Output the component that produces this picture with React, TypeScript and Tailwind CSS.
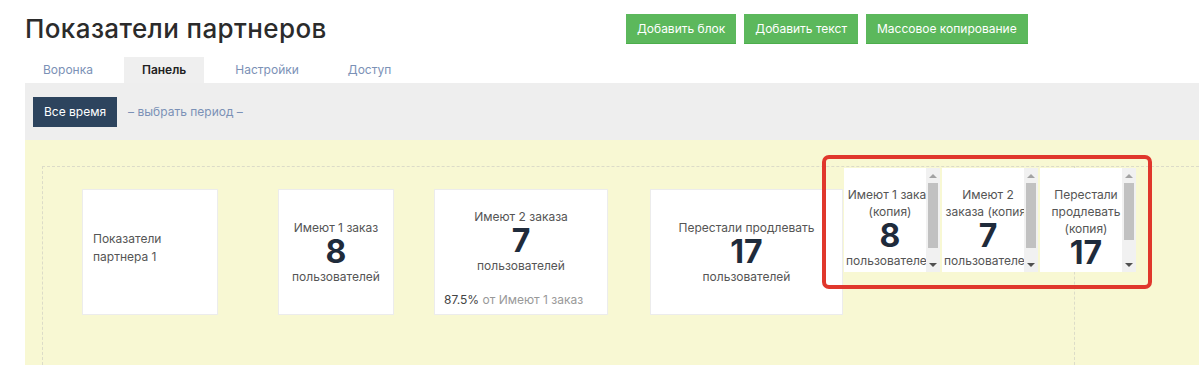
import React from "react";

const font = "font-['Inter','Noto_Sans',sans-serif]";

function GreenButton({ children }: { children: React.ReactNode }) {
  return (
    <button className="h-[30px] px-[11px] bg-[#5cb85c] border-b border-[#4cae4c] text-[12px] leading-[30px] text-white">
      {children}
    </button>
  );
}

function Tab({ label, active = false }: { label: string; active?: boolean }) {
  return (
    <div
      className={
        active
          ? "h-[26px] px-[18px] bg-[#efefef] text-[12px] leading-[26px] font-semibold text-[#222]"
          : "h-[26px] px-[18px] text-[12px] leading-[26px] text-[#7b91b6]"
      }
    >
      {label}
    </div>
  );
}

function StatCard({
  title,
  value,
  width,
}: {
  title: string;
  value: string;
  width: string;
}) {
  return (
    <div
      className={`relative ${width} h-[126px] mt-[22px] bg-white border border-[#ececec] flex flex-col items-center justify-center text-center`}
    >
      <div className="text-[12px] leading-[17px] text-[#555] whitespace-nowrap">{title}</div>
      <div className="text-[32px] leading-[32px] font-bold text-[#1f2b3b]">{value}</div>
      <div className="text-[12px] leading-[17px] text-[#555]">пользователей</div>
    </div>
  );
}

function Scrollbar({ thumb }: { thumb: string }) {
  return (
    <div className="w-[14px] h-full bg-[#f1f1f1] flex flex-col items-center shrink-0">
      <div className="h-[15px] w-full flex items-center justify-center">
        <div className="w-0 h-0 border-l-[4px] border-r-[4px] border-b-[4px] border-l-transparent border-r-transparent border-b-[#a3a3a3]" />
      </div>
      <div className={`w-[10px] ${thumb} bg-[#c1c1c1]`} />
      <div className="flex-1" />
      <div className="h-[15px] w-full flex items-center justify-center">
        <div className="w-0 h-0 border-l-[4px] border-r-[4px] border-t-[4px] border-l-transparent border-r-transparent border-t-[#505050]" />
      </div>
    </div>
  );
}

function CopyCard({
  lines,
  value,
  tail = true,
  thumb,
  className = "",
}: {
  lines: string[];
  value: string;
  tail?: boolean;
  thumb: string;
  className?: string;
}) {
  return (
    <div className={`relative w-[96px] h-[104px] mt-[1px] bg-white flex ${className}`}>
      <div className="w-[82px] h-full overflow-hidden">
        <div className="w-[92px] px-[2px] pt-[18px] text-center">
          {lines.map((l) => (
            <div key={l} className="text-[12px] leading-[17px] text-[#555] whitespace-nowrap">
              {l}
            </div>
          ))}
          <div className="text-[32px] leading-[32px] font-bold text-[#1f2b3b]">{value}</div>
          {tail && (
            <div className="text-[12px] leading-[17px] text-[#555] whitespace-nowrap">
              пользователей
            </div>
          )}
        </div>
      </div>
      <Scrollbar thumb={thumb} />
    </div>
  );
}

export default function App() {
  return (
    <div className={`relative w-[1199px] h-[365px] overflow-hidden bg-white ${font}`}>
      {/* header */}
      <div className="flex items-start pl-[25px] pt-[14px]">
        <h1 className="w-[601px] text-[26px] leading-[30px] font-medium tracking-[0.4px] text-[#2b2b2b]">
          Показатели партнеров
        </h1>
        <div className="flex gap-[8px]">
          <GreenButton>Добавить блок</GreenButton>
          <GreenButton>Добавить текст</GreenButton>
          <GreenButton>Массовое копирование</GreenButton>
        </div>
      </div>

      {/* tabs */}
      <div className="flex gap-[13px] pl-[25px] mt-[13px]">
        <Tab label="Воронка" />
        <Tab label="Панель" active />
        <Tab label="Настройки" />
        <Tab label="Доступ" />
      </div>

      {/* period bar */}
      <div className="ml-[25px] h-[57px] bg-[#eeeeee] flex items-center pl-[8px]">
        <button className="h-[30px] px-[11px] bg-[#2d445e] text-[12px] text-white">Все время</button>
        <span className="ml-[11px] text-[12px] text-[#7b91b6]">– выбрать период –</span>
      </div>

      {/* dashboard */}
      <div className="relative ml-[25px] h-[225px] bg-[#f8f8d3] pt-[26px] pl-[17px]">
        <div className="absolute left-[1049px] top-[26px] bottom-0 border-l border-dashed border-[#dcdcc8]" />
        <div className="h-full border-l border-t border-dashed border-[#dcdcc8] flex items-start pl-[39px]">
          <div className="relative w-[136px] h-[126px] mt-[22px] bg-white border border-[#ececec] flex items-center px-[10px] pb-[8px]">
            <div className="text-[12px] leading-[18px] text-[#555]">
              Показатели
              <br />
              партнера 1
            </div>
          </div>
          <div className="ml-[60px]">
            <StatCard title="Имеют 1 заказ" value="8" width="w-[116px]" />
          </div>
          <div className="relative ml-[40px] w-[174px] h-[126px] mt-[22px] bg-white border border-[#ececec] flex flex-col text-center">
            <div className="pt-[18px] text-[12px] leading-[17px] text-[#555]">Имеют 2 заказа</div>
            <div className="text-[32px] leading-[32px] font-bold text-[#1f2b3b]">7</div>
            <div className="text-[12px] leading-[17px] text-[#555]">пользователей</div>
            <div className="mt-auto pb-[5px] pl-[9px] text-left text-[12px] leading-[18px] text-[#999]">
              <span className="text-[#444]">87.5%</span> от Имеют 1 заказ
            </div>
          </div>
          <div className="ml-[42px]">
            <StatCard title="Перестали продлевать" value="17" width="w-[193px]" />
          </div>
          <CopyCard className="ml-[1px]" lines={["Имеют 1 заказ", "(копия)"]} value="8" thumb="h-[65px]" />
          <CopyCard className="ml-[2px]" lines={["Имеют 2", "заказа (копия)"]} value="7" thumb="h-[65px]" />
          <CopyCard
            className="ml-[2px]"
            lines={["Перестали", "продлевать", "(копия)"]}
            value="17"
            tail={false}
            thumb="h-[57px]"
          />
        </div>
      </div>

      {/* highlight */}
      <div className="pointer-events-none absolute left-[822px] top-[155px] w-[330px] h-[134px] border-[4px] border-[#e0372c] rounded-[7px]" />
    </div>
  );
}
